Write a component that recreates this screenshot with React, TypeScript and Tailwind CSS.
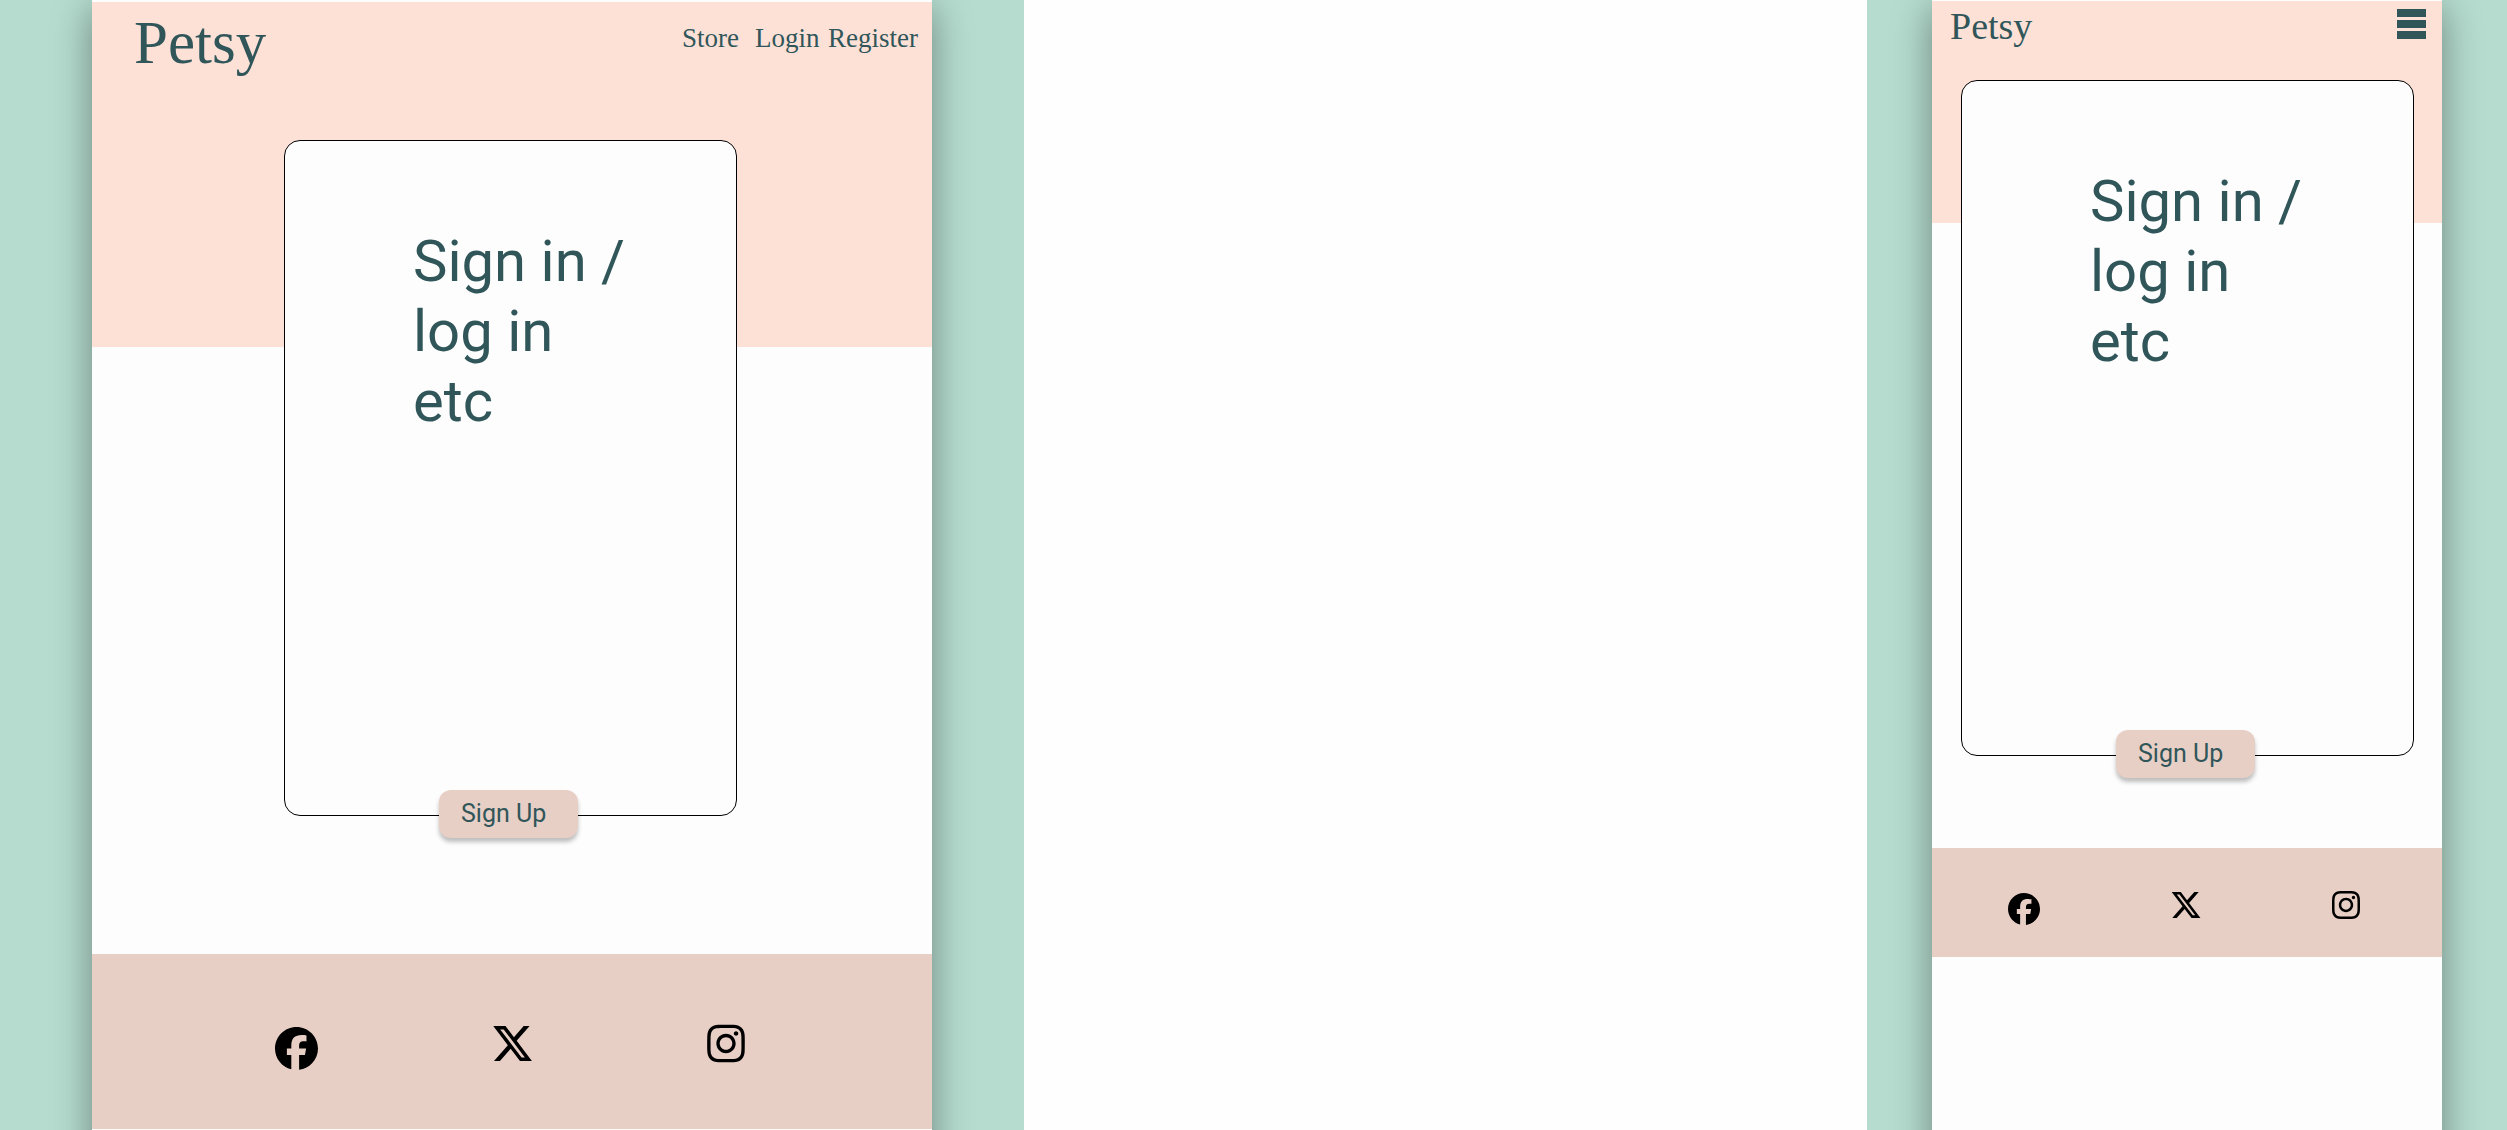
import React from "react";
import { FaFacebook, FaInstagram, FaXTwitter } from "react-icons/fa6";

const pageShadow = "-mb-10 shadow-[0_8px_36px_rgba(0,0,0,0.4)]";

function SignCard() {
  return (
    <section className="flex h-[676px] w-[453px] flex-col justify-between rounded-2xl border border-black bg-[#fdfdfd]">
      <h1 className="ml-[128px] mt-[85px] text-[58px] leading-[70px]">
        Sign in /<br />
        log in
        <br />
        etc
      </h1>
      <button
        type="button"
        className="-mb-[23px] ml-[154px] h-12 w-[139px] shrink-0 rounded-xl bg-[#e8cfc5] pb-0.5 pl-[22px] text-left text-[25px] leading-none shadow-[0_4px_4px_rgba(0,0,0,0.25)]"
      >
        Sign Up
      </button>
    </section>
  );
}

function DesktopPage() {
  return (
    <div className="grid grid-cols-[92fr_840fr_92fr] overflow-hidden bg-[#b5dccf]">
      <div className={`col-start-2 flex flex-col bg-[#fdfdfd] pt-0.5 ${pageShadow}`}>
        <header className="flex h-[345px] items-start justify-between bg-[#fde1d7] pl-[42px] pr-3.5 font-['Liberation_Serif',serif]">
          <a href="#home" className="mt-[6px] text-[61px] leading-[70px]">
            Petsy
          </a>
          <nav className="mt-[20px] grid grid-cols-[73px_73px_auto] text-[27px] leading-8">
            <a href="#store">Store</a>
            <a href="#login">Login</a>
            <a href="#register">Register</a>
          </nav>
        </header>
        <main className="-mt-[207px] flex justify-center pb-[138px] pr-[3px]">
          <SignCard />
        </main>
        <footer className="flex h-[175px] items-start justify-between bg-[#e8cfc5] pl-[21.8%] pr-[22.3%] pt-[68px] text-black">
          <a href="#facebook" aria-label="Facebook" className="mt-[5px]">
            <FaFacebook className="size-[43px]" />
          </a>
          <a href="#x" aria-label="X">
            <FaXTwitter className="size-[43px]" />
          </a>
          <a href="#instagram" aria-label="Instagram">
            <FaInstagram className="h-[43px] w-[38px]" />
          </a>
        </footer>
      </div>
    </div>
  );
}

function MobilePage() {
  return (
    <div className="col-start-3 grid grid-cols-[65fr_510fr_65fr] overflow-hidden bg-[#b5dccf]">
      <div className={`col-start-2 flex flex-col bg-[#fdfdfd] pt-px ${pageShadow}`}>
        <header className="flex h-[222px] items-start justify-between bg-[#fde1d7] pl-[18px] pr-4">
          <a
            href="#home"
            className="mt-[3px] font-['Liberation_Serif',serif] text-[38px] leading-[44px]"
          >
            Petsy
          </a>
          <button type="button" aria-label="Menu" className="mt-2 flex flex-col gap-[3px]">
            <span className="h-2 w-[29px] bg-[#30565a]" />
            <span className="h-2 w-[29px] bg-[#30565a]" />
            <span className="h-2 w-[29px] bg-[#30565a]" />
          </button>
        </header>
        <main className="-mt-[143px] flex justify-center pb-[92px] pl-px">
          <SignCard />
        </main>
        <footer className="flex h-[109px] items-start justify-between bg-[#e8cfc5] pl-[14.9%] pr-[16.1%] pt-[41px] text-black">
          <a href="#facebook" aria-label="Facebook" className="mt-1">
            <FaFacebook className="size-8" />
          </a>
          <a href="#x" aria-label="X">
            <FaXTwitter className="size-8" />
          </a>
          <a href="#instagram" aria-label="Instagram">
            <FaInstagram className="h-8 w-7" />
          </a>
        </footer>
      </div>
    </div>
  );
}

export default function App() {
  return (
    <div className="grid min-h-screen grid-cols-[1024fr_843fr_640fr] bg-[#fefefe] font-['Roboto',sans-serif] text-[#30565a]">
      <DesktopPage />
      <MobilePage />
    </div>
  );
}
